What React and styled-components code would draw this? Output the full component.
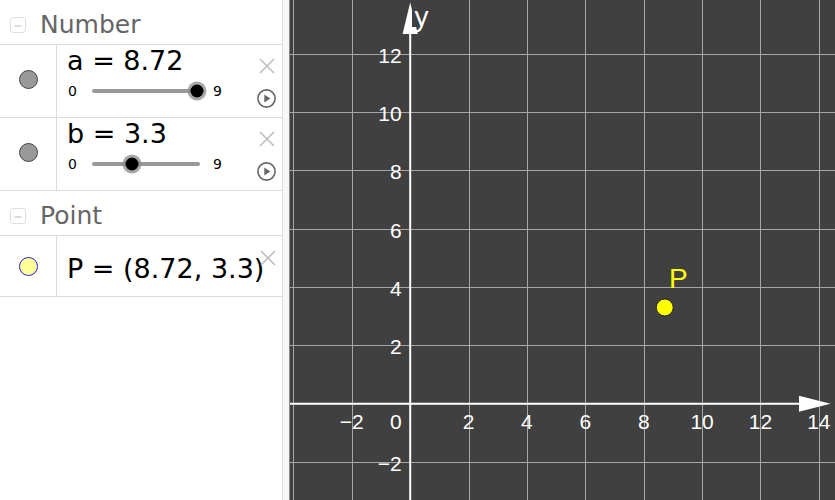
import React from 'react';
import styled, { createGlobalStyle } from 'styled-components';

const Global = createGlobalStyle`
  * { box-sizing: border-box; }
  html, body { margin: 0; padding: 0; background: #fff; }
  body { font-family: "DejaVu Sans", "Noto Sans", sans-serif; }
`;

const Page = styled.div`
  display: flex;
  width: 835px;
  height: 500px;
  overflow: hidden;
`;

const Algebra = styled.div`
  width: 283px;
  flex: none;
  border-right: 1px solid #dcdcdc;
  background: #fff;
  display: flex;
  flex-direction: column;
`;

const Splitter = styled.div`
  width: 6px;
  flex: none;
  background: #f7f7f7;
`;

const Graphics = styled.div`
  flex: 1;
  background: #404040;
  border-left: 1px solid #8c8c8c;
  overflow: hidden;
  display: flex;
`;

const Header = styled.div`
  height: 45px;
  border-bottom: 1px solid #dcdcdc;
  display: flex;
  align-items: baseline;
  padding: 10px 0 0 10px;
`;

const HeaderTitle = styled.span`
  font-size: 25px;
  line-height: 30px;
  color: #666;
  margin-left: 14px;
`;

const Row = styled.div`
  display: flex;
  height: ${(p) => p.$h}px;
  border-bottom: 1px solid #dcdcdc;
`;

const MarkerCell = styled.div`
  width: 57px;
  flex: none;
  border-right: 1px solid #dcdcdc;
  display: flex;
  align-items: center;
  justify-content: center;
  padding-bottom: ${(p) => p.$lift || 0}px;
`;

const Marker = styled.div`
  width: 19px;
  height: 19px;
  border-radius: 50%;
  background: ${(p) => p.$fill};
  border: 1px solid ${(p) => p.$stroke};
`;

const Content = styled.div`
  flex: 1;
  position: relative;
  padding: ${(p) => p.$top || 0}px 0 0 10px;
  display: flex;
  flex-direction: column;
`;

const Value = styled.div`
  font-size: 27px;
  line-height: 32px;
  color: #000;
  white-space: nowrap;
`;

const SliderLine = styled.div`
  display: flex;
  align-items: center;
  height: 20px;
  margin-top: 4px;
  font-size: 14px;
  color: #000;
  padding-left: 1px;
`;

const Track = styled.div`
  position: relative;
  width: 108px;
  height: 4px;
  border-radius: 2px;
  background: #999;
  margin: 0 13px 0 15px;
`;

const Knob = styled.div`
  position: absolute;
  top: 50%;
  width: 13px;
  height: 13px;
  border-radius: 50%;
  background: #000;
  transform: translate(-50%, -50%);
  box-shadow: 0 0 0 3px rgba(140, 140, 140, 0.75);
`;

const Buttons = styled.div`
  position: absolute;
  right: 6px;
  top: ${(p) => p.$top}px;
  display: flex;
  flex-direction: column;
  align-items: center;
  gap: 15px;
`;

const CollapseIcon = () => (
  <svg width="16" height="16" viewBox="0 0 16 16">
    <rect x="0.5" y="0.5" width="15" height="15" rx="3" fill="#fff" stroke="#dcdcdc" />
    <line x1="4.5" y1="9" x2="11.5" y2="9" stroke="#c8c8c8" strokeWidth="1.3" />
  </svg>
);

const CloseIcon = () => (
  <svg width="16" height="16" viewBox="0 0 16 16">
    <path d="M1 1 L15 15 M15 1 L1 15" stroke="#bdbdbd" strokeWidth="1.6" fill="none" />
  </svg>
);

const PlayIcon = () => (
  <svg width="19" height="19" viewBox="0 0 19 19">
    <circle cx="9.5" cy="9.5" r="8.6" fill="none" stroke="#666" strokeWidth="1.6" />
    <path d="M7.3 5.6 L13.3 9.5 L7.3 13.4 Z" fill="#666" />
  </svg>
);

const SliderRow = ({ name, value, max }) => (
  <Row $h={73}>
    <MarkerCell $lift={3}>
      <Marker $fill="#999" $stroke="#444" />
    </MarkerCell>
    <Content $top={0}>
      <Value>{`${name} = ${value}`}</Value>
      <SliderLine>
        <span>0</span>
        <Track>
          <Knob style={{ left: `${(value / max) * 100}%` }} />
        </Track>
        <span>{max}</span>
      </SliderLine>
      <Buttons $top={13}>
        <CloseIcon />
        <PlayIcon />
      </Buttons>
    </Content>
  </Row>
);

const GroupHeader = ({ title }) => (
  <Header>
    <CollapseIcon />
    <HeaderTitle>{title}</HeaderTitle>
  </Header>
);

const ox = 410.2;
const oy = 403.8;
const u = 29.19;
const fmt = (n) => (n < 0 ? `\u2212${-n}` : `${n}`);

const Plot = () => {
  const xs = [-4, -2, 2, 4, 6, 8, 10, 12, 14];
  const ys = [-2, 2, 4, 6, 8, 10, 12];
  const px = ox + 8.72 * u;
  const py = oy - 3.3 * u;
  return (
    <svg width="545" height="500" viewBox="290 0 545 500" style={{ display: 'block' }}>
      <g stroke="#a6a6a6" strokeWidth="1" shapeRendering="crispEdges">
        {xs.map((k) => (
          <line key={`v${k}`} x1={Math.round(ox + k * u) + 0.5} y1="0" x2={Math.round(ox + k * u) + 0.5} y2="500" />
        ))}
        {ys.map((k) => (
          <line key={`h${k}`} x1="290" y1={Math.round(oy - k * u) + 0.5} x2="835" y2={Math.round(oy - k * u) + 0.5} />
        ))}
      </g>
      <g stroke="#fff" strokeWidth="2">
        <line x1="290" y1={oy} x2="805" y2={oy} />
        <line x1={ox} y1="30" x2={ox} y2="500" />
      </g>
      <polygon points={`830.5,${oy} 799,${oy - 8} 799,${oy + 8}`} fill="#fff" />
      <polygon points={`${ox},2.5 ${ox - 7.6},34 ${ox + 7.6},34`} fill="#fff" />
      <rect x="412" y="0" width="22" height="27" fill="#404040" />
      <g fontFamily="'Liberation Sans', Arial, sans-serif" fill="#fff">
        <text x="414.5" y="25.8" fontSize="28">y</text>
        {xs.filter((k) => k !== -4).map((k) => (
          <text key={`xl${k}`} x={ox + k * u} y="428.5" fontSize="21" textAnchor="middle">{fmt(k)}</text>
        ))}
        <text x="401.7" y="428.5" fontSize="21" textAnchor="end">0</text>
        {ys.map((k) => (
          <text key={`yl${k}`} x="401.7" y={oy - k * u + 9} fontSize="21" textAnchor="end">{fmt(k)}</text>
        ))}
      </g>
      <circle cx={px} cy={py} r="8.5" fill="#ffff00" stroke="#222" strokeWidth="1" />
      <text x="669" y="288" fontSize="28" fill="#ffff00" fontFamily="'Liberation Sans', Arial, sans-serif">P</text>
    </svg>
  );
};

export default function App() {
  return (
    <>
      <Global />
      <Page>
        <Algebra>
          <GroupHeader title="Number" />
          <SliderRow name="a" value={8.72} max={9} />
          <SliderRow name="b" value={3.3} max={9} />
          <GroupHeader title="Point" />
          <Row $h={61}>
            <MarkerCell>
              <Marker $fill="#ffff99" $stroke="#2222dd" />
            </MarkerCell>
            <Content $top={17}>
              <Value>P = (8.72, 3.3)</Value>
              <Buttons $top={14}>
                <CloseIcon />
              </Buttons>
            </Content>
          </Row>
        </Algebra>
        <Splitter />
        <Graphics>
          <Plot />
        </Graphics>
      </Page>
    </>
  );
}
